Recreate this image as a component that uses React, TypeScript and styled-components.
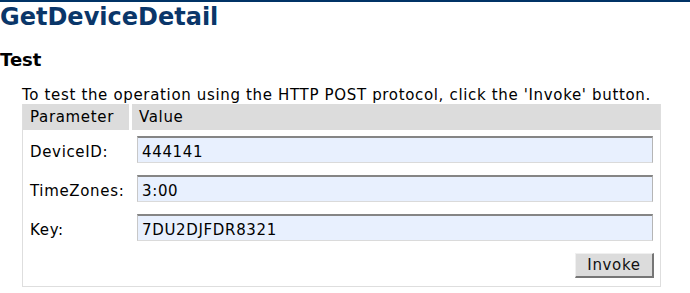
import styled, { createGlobalStyle } from "styled-components";

const GlobalStyle = createGlobalStyle`
  html, body {
    margin: 0;
    padding: 0;
    background: #ffffff;
  }
  body {
    font-family: "DejaVu Sans", Verdana, sans-serif;
    color: #000000;
  }
`;

const params = [
  { name: "DeviceID", value: "444141" },
  { name: "TimeZones", value: "3:00" },
  { name: "Key", value: "7DU2DJFDR8321" },
];

const App = () => {
  return (
    <>
      <GlobalStyle />
      <Page>
        <TopBar />
        <Heading>GetDeviceDetail</Heading>
        <SubHeading>Test</SubHeading>
        <Intro>
          To test the operation using the HTTP POST protocol, click the
          'Invoke' button.
        </Intro>
        <Form onSubmit={(e) => e.preventDefault()}>
          <HeaderCell $divider>Parameter</HeaderCell>
          <HeaderCell>Value</HeaderCell>
          {params.map((p) => (
            <Row key={p.name}>
              <Label>{p.name}:</Label>
              <ValueCell>
                <Input type="text" defaultValue={p.value} />
              </ValueCell>
            </Row>
          ))}
          <Row>
            <Label />
            <ActionCell>
              <InvokeButton type="submit">Invoke</InvokeButton>
            </ActionCell>
          </Row>
        </Form>
      </Page>
    </>
  );
};

export default App;

const Page = styled.div`
  width: 690px;
  height: 293px;
  overflow: hidden;
`;

const TopBar = styled.div`
  height: 2px;
  background: #003366;
`;

const Heading = styled.h2`
  margin: 1px 0 0 0;
  font-size: 24px;
  line-height: 28px;
  font-weight: bold;
  color: #0a3669;
`;

const SubHeading = styled.h3`
  margin: 18px 0 0 0;
  font-size: 18px;
  line-height: 22px;
  font-weight: bold;
`;

const Intro = styled.p`
  margin: 16px 0 0 22px;
  font-size: 15px;
  line-height: 17px;
  letter-spacing: 0.66px;
  white-space: nowrap;
`;

const Form = styled.form`
  margin: 0 0 0 22px;
  width: 639px;
  box-sizing: border-box;
  display: grid;
  grid-template-columns: 109px 1fr;
  border: 1px solid #dedede;
  border-top: none;
  font-size: 15px;
  letter-spacing: 0.66px;
`;

const HeaderCell = styled.div<{ $divider?: boolean }>`
  background: #dcdcdc;
  padding: 4px 7px;
  line-height: 18px;
  border-right: ${(p) => (p.$divider ? "3px solid #ffffff" : "none")};
`;

const Row = styled.div`
  display: contents;
`;

const Label = styled.div`
  padding: 6px 7px 8px 7px;
  height: 25px;
  display: flex;
  align-items: flex-end;
  line-height: 18px;
`;

const ValueCell = styled.div`
  padding: 6px 7px 6px 5px;
`;

const ActionCell = styled.div`
  padding: 6px 6px 6px 5px;
  display: flex;
  justify-content: flex-end;
`;

const Input = styled.input`
  display: block;
  width: 100%;
  height: 27px;
  box-sizing: border-box;
  margin: 0;
  padding: 4px 4px 1px 4px;
  font-family: "DejaVu Sans", Verdana, sans-serif;
  font-size: 15px;
  letter-spacing: 0.66px;
  color: #000000;
  background: #e8f0fe;
  border-style: solid;
  border-width: 2px 1px 1px 1px;
  border-color: #858585 #b5b5b5 #dadada #c8c8c8;
  outline: none;
`;

const InvokeButton = styled.button`
  height: 25px;
  width: 79px;
  margin: 0;
  padding: 0;
  font-family: "DejaVu Sans", Verdana, sans-serif;
  font-size: 15px;
  letter-spacing: 0.66px;
  color: #111111;
  background: #dcdcdc;
  border-style: solid;
  border-width: 1px 2px 2px 1px;
  border-color: #f0f0f0 #767676 #767676 #f0f0f0;
  cursor: pointer;
`;
